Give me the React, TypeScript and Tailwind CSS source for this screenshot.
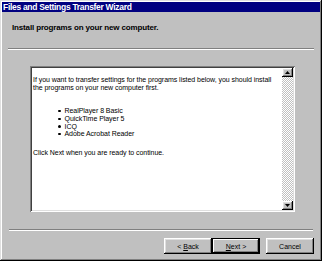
import React from "react";

const raised =
  "shadow-[inset_-1px_-1px_#000,inset_1px_1px_#fff,inset_-2px_-2px_#808080,inset_2px_2px_#dfdfdf]";

function Btn({ children, def }: { children: React.ReactNode; def?: boolean }) {
  return (
    <div
      className={`w-[48px] h-[16px] flex items-center justify-center text-[7px] leading-none text-black bg-[#c0c0c0] ${
        def
          ? "border border-black shadow-[inset_-1px_-1px_#000,inset_1px_1px_#fff,inset_-2px_-2px_#808080]"
          : raised
      }`}
    >
      {children}
    </div>
  );
}

function ScrollBtn({ up }: { up?: boolean }) {
  return (
    <div className={`w-[11px] h-[9px] bg-[#c0c0c0] flex items-center justify-center ${raised}`}>
      <svg width="5" height="3" viewBox="0 0 5 3">
        <path d={up ? "M2.5 0 L5 3 L0 3 Z" : "M0 0 L5 0 L2.5 3 Z"} fill="#000" />
      </svg>
    </div>
  );
}

export default function App() {
  const items = ["RealPlayer 8 Basic", "QuickTime Player 5", "ICQ", "Adobe Acrobat Reader"];
  return (
    <div
      className="w-[322px] h-[261px] bg-[#c0c0c0] p-[2px] flex flex-col shadow-[inset_-1px_-1px_#000,inset_1px_1px_#dfdfdf,inset_-2px_-2px_#808080,inset_2px_2px_#fff]"
      style={{ fontFamily: '"Liberation Sans", Arial, sans-serif' }}
    >
      <div className="h-[10px] bg-[#000080] text-white font-bold text-[8.5px] leading-[10px] pl-[1px] tracking-[-0.3px]">
        Files and Settings Transfer Wizard
      </div>
      <div className="h-[36px] pl-[10px] pt-[12px] font-bold text-[8px] leading-none text-black tracking-[-0.15px]">
        Install programs on your new computer.
      </div>
      <div className="mx-[6px] h-[2px] border-t border-t-[#808080] border-b border-b-white" />
      <div className="h-[179px] pt-[16px] pl-[28px]">
        <div className="w-[265px] h-[146px] bg-white flex shadow-[inset_1px_1px_#808080,inset_-1px_-1px_#fff,inset_2px_2px_#404040,inset_-2px_-2px_#dfdfdf] p-[2px]">
          <div className="flex-1 pl-[1px] pt-[8px] text-[7px] leading-[7.67px] text-black tracking-[-0.05px]">
            <p>
              If you want to transfer settings for the programs listed below, you should install the
              programs on your new computer first.
            </p>
            <ul className="mt-[16px] pl-[25px]">
              {items.map((it) => (
                <li key={it} className="flex items-center">
                  <span className="w-[2.5px] h-[2.5px] rounded-full bg-black mr-[4px]" />
                  {it}
                </li>
              ))}
            </ul>
            <p className="mt-[11px]">Click Next when you are ready to continue.</p>
          </div>
          <div className="w-[11px] flex flex-col bg-[repeating-conic-gradient(#c0c0c0_0%_25%,#ffffff_0%_50%)] bg-[length:2px_2px]">
            <ScrollBtn up />
            <div className="flex-1" />
            <ScrollBtn />
          </div>
        </div>
      </div>
      <div className="mx-[7px] h-[2px] border-t border-t-[#808080] border-b border-b-white" />
      <div className="flex-1 pt-[7px] pr-[6px] flex justify-end items-start">
        <Btn>
          &lt;&nbsp;<span className="underline">B</span>ack
        </Btn>
        <Btn def>
          <span className="underline">N</span>ext&nbsp;&gt;
        </Btn>
        <div className="w-[6px]" />
        <Btn>Cancel</Btn>
      </div>
    </div>
  );
}
